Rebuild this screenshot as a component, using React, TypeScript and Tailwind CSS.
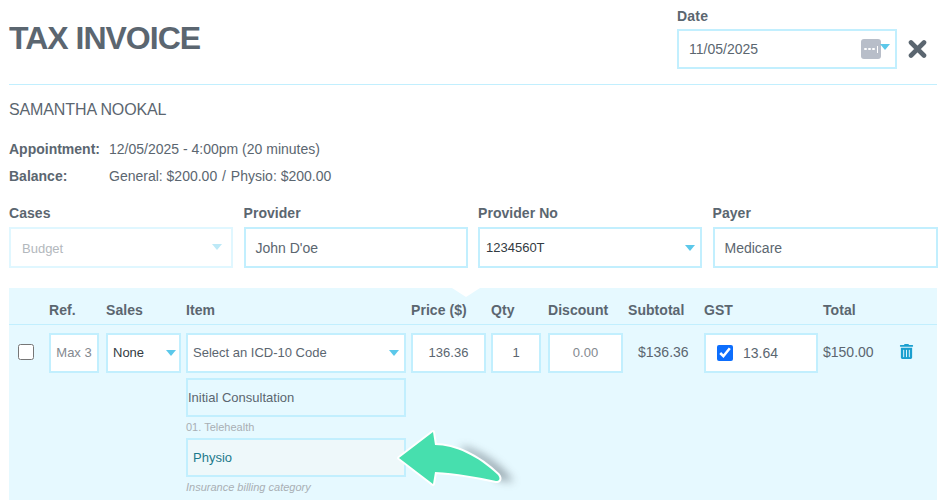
import { FaTrashAlt } from 'react-icons/fa';

const Caret = ({ className = '' }: { className?: string }) => (
  <span
    className={`w-0 h-0 border-x-[5px] border-x-transparent border-t-[6px] border-t-[#5cc8ea] ${className}`}
  />
);

const Label = ({ children }: { children: React.ReactNode }) => (
  <div className="text-sm leading-4 font-bold text-[#5b6670] tracking-[0.05px]">{children}</div>
);

const Box = ({ children, className = '' }: { children?: React.ReactNode; className?: string }) => (
  <div className={`flex items-center border-2 border-[#c2effe] bg-white text-[#5b6670] ${className}`}>
    {children}
  </div>
);

const rowGrid =
  'grid grid-cols-[40px_57px_80px_225px_80px_57px_80px_76px_119px_76px_1fr]';

export default function App() {
  return (
    <div className="w-[951px] h-[500px] overflow-hidden bg-white font-['Liberation_Sans',sans-serif] text-[#5b6670] relative">
      <div className="pl-[9px] pr-[14px]">
        {/* top bar */}
        <div className="h-[85px] border-b border-[#c2effe] flex justify-between">
          <h1 className="mt-[20px] text-[32px] leading-9 font-bold tracking-[-1px] text-[#5b6670]">TAX INVOICE</h1>
          <div className="flex items-start mr-[10px]">
            <div className="w-[220px] mt-[8px]">
              <div className="text-sm leading-4 font-bold tracking-[0.2px] mb-[5px]">Date</div>
              <Box className="h-10 pl-[10px] pr-[5px] text-sm justify-between">
                <span>11/05/2025</span>
                <span className="flex items-center">
                  <span className="w-5 h-5 rounded-[3px] bg-[#b8bec9] flex items-center justify-center gap-[1.5px]">
                    <span className="w-[2.5px] h-[2.5px] rounded-full bg-white" />
                    <span className="w-[2.5px] h-[2.5px] rounded-full bg-white" />
                    <span className="w-[2.5px] h-[2.5px] rounded-full bg-white" />
                    <span className="w-px h-[7px] ml-[1px] bg-white" />
                  </span>
                  <Caret className="-mt-[4px] -ml-px" />
                </span>
              </Box>
            </div>
            <svg className="ml-[11px] mt-[40px]" width="19" height="18" viewBox="0 0 19 18">
              <path d="M3 2.5 L16 15.5 M16 2.5 L3 15.5" stroke="#5b6670" strokeWidth="4.6" strokeLinecap="round" />
            </svg>
          </div>
        </div>

        <div className="mt-[15px] text-base leading-5 tracking-[-0.12px]">SAMANTHA NOOKAL</div>

        <div className="mt-[19px] text-sm leading-5 flex">
          <span className="w-[100px] font-bold">Appointment:</span>
          <span>12/05/2025 - 4:00pm (20 minutes)</span>
        </div>
        <div className="mt-[7px] text-sm leading-5 flex">
          <span className="w-[100px] font-bold">Balance:</span>
          <span>
            General: $200.00 <span className="mx-px">/</span> Physio: $200.00
          </span>
        </div>

        {/* provider fields */}
        <div className="mt-[19px] grid grid-cols-[224px_224px_224px_225px] gap-x-[10.5px]">
          <div>
            <Label>Cases</Label>
            <Box className="mt-[6px] h-[41px] !border-[#e0f7ff] pl-[11px] pr-[9px] justify-between text-[13px] !text-[#b3b8bd]">
              <span className="mt-[2px]">Budget</span>
              <Caret className="!border-t-[#bde9f7] -mt-[2px]" />
            </Box>
          </div>
          <div>
            <Label>Provider</Label>
            <Box className="mt-[6px] h-[41px] pl-[10px] text-sm">John D'oe</Box>
          </div>
          <div>
            <Label>Provider No</Label>
            <Box className="mt-[6px] h-[41px] pl-[6px] pr-[5px] justify-between text-[13px] !text-[#333b42]">
              <span>1234560T</span>
              <Caret />
            </Box>
          </div>
          <div>
            <Label>Payer</Label>
            <Box className="mt-[6px] h-[41px] pl-[10px] text-sm">Medicare</Box>
          </div>
        </div>

        {/* invoice line panel */}
        <div className="relative mt-[20px] h-[212px] bg-[#e6f9ff]">
          <span className="absolute top-0 left-[443px] w-0 h-0 border-x-[14px] border-x-transparent border-t-[9px] border-t-white" />
          <div className={`${rowGrid} h-[37px] items-end pb-[6px] border-b border-[#c2effe] text-sm leading-4 font-bold tracking-[0.05px]`}>
            <span />
            <span>Ref.</span>
            <span>Sales</span>
            <span>Item</span>
            <span>Price ($)</span>
            <span>Qty</span>
            <span>Discount</span>
            <span>Subtotal</span>
            <span>GST</span>
            <span>Total</span>
            <span />
          </div>
          <div className={`${rowGrid} pt-[8px] items-start text-[13px]`}>
            <div className="pl-[9px] pt-[11px]">
              <input type="checkbox" className="block w-4 h-4" />
            </div>
            <Box className="h-10 w-[50px] justify-center !text-[#83898f]">Max 3</Box>
            <Box className="h-10 w-[75px] pl-[5px] pr-[3px] justify-between !text-[#333b42]">
              <span>None</span>
              <Caret />
            </Box>
            <div className="w-[220px]">
              <Box className="h-10 pl-[5px] pr-[5px] justify-between">
                <span>Select an ICD-10 Code</span>
                <Caret />
              </Box>
              <Box className="mt-[5px] h-[39px] !bg-[#e6f9ff]">Initial Consultation</Box>
              <div className="mt-[2px] mb-[3px] text-[11px] leading-4 text-[#a9afb4]">01. Telehealth</div>
              <Box className="h-[39px] !bg-[#eef8fa] pl-[5px] !text-[#1d7a8c]">Physio</Box>
              <div className="mt-[2px] text-[11px] leading-4 italic text-[#a9afb4]">Insurance billing category</div>
            </div>
            <Box className="h-10 w-[75px] justify-center">136.36</Box>
            <Box className="h-10 w-[50px] justify-center">1</Box>
            <Box className="h-10 w-[75px] justify-center !text-[#83898f]">0.00</Box>
            <div className="pt-[11px] pl-[10px] text-sm leading-4">$136.36</div>
            <Box className="h-10 w-[114px] pl-[11px] text-sm">
              <input type="checkbox" defaultChecked className="w-4 h-4 accent-[#0d6efd]" />
              <span className="ml-[10px]">13.64</span>
            </Box>
            <div className="pt-[11px] text-sm leading-4">$150.00</div>
            <div className="pt-[11px] text-[#1a9fcf]">
              <FaTrashAlt size={15} />
            </div>
          </div>
        </div>
      </div>

      {/* callout arrow */}
      <svg className="absolute left-[390px] top-[425px] overflow-visible" width="130" height="70" viewBox="390 425 130 70">
        <defs>
          <filter id="arrowShadow" x="-40%" y="-40%" width="180%" height="180%">
            <feGaussianBlur stdDeviation="4" />
          </filter>
        </defs>
        <path d="M462 446 C484 452 502 465 514 482 L498 480 C488 466 476 458 462 452 Z" fill="#5d6a73" opacity="0.55" filter="url(#arrowShadow)" />
        <path
          d="M399 458 L433 432 L435 445 C455 445 478 456 498 475 C501 479 499 481 496 481 C478 477 456 473 435 472 L433 484 Z"
          fill="#47dfae"
          stroke="#fff"
          strokeWidth="4"
          strokeLinejoin="round"
          paintOrder="stroke"
        />
      </svg>
    </div>
  );
}
